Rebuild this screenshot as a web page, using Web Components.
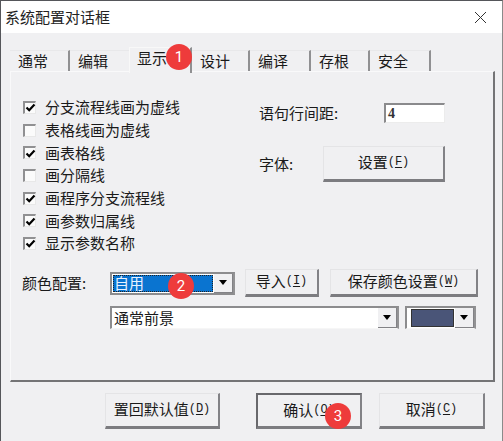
<!DOCTYPE html>
<html lang="zh-CN">
<head>
<meta charset="utf-8">
<title>系统配置对话框</title>
<style>
html, body { margin: 0; padding: 0; background: #f0f0f2; }
body { width: 503px; height: 441px; overflow: hidden; font: 15px/20px "Noto Sans CJK SC", sans-serif; color: #1a1a1a; }
</style>
</head>
<body>
<dlg-window caption="系统配置对话框">
  <tab-strip>
    <tab-item w="60">通常</tab-item>
    <tab-item w="61">编辑</tab-item>
    <tab-item w="63" active>显示<num-badge n="1" style="left:36px;top:-4px"></num-badge></tab-item>
    <tab-item w="58">设计</tab-item>
    <tab-item>编译</tab-item>
    <tab-item w="59">存根</tab-item>
    <tab-item>安全</tab-item>
  </tab-strip>
  <tab-panel>
    <top-row>
      <check-list>
        <check-row checked>分支流程线画为虚线</check-row>
        <check-row>表格线画为虚线</check-row>
        <check-row checked>画表格线</check-row>
        <check-row>画分隔线</check-row>
        <check-row checked>画程序分支流程线</check-row>
        <check-row checked>画参数归属线</check-row>
        <check-row checked>显示参数名称</check-row>
      </check-list>
      <side-opts>
        <opt-row w="125"><span>语句行间距:</span><num-input value="4"></num-input></opt-row>
        <opt-row w="64"><span>字体:</span><win-button w="122" h="36">设置<hot-key>F</hot-key></win-button></opt-row>
      </side-opts>
    </top-row>
    <color-row>
      <span slot="label">颜色配置:</span>
      <win-combo w="125" selected>自用<num-badge n="2" style="left:56px;top:-1px"></num-badge></win-combo>
      <win-button w="74" h="28" style="margin-left:10px">导入<hot-key>I</hot-key></win-button>
      <win-button w="148" h="28" style="margin-left:11px">保存颜色设置<hot-key>W</hot-key></win-button>
    </color-row>
    <color-row>
      <win-combo w="289">通常前景</win-combo>
      <win-combo w="71" swatch="#4a5578" style="margin-left:6px"></win-combo>
    </color-row>
  </tab-panel>
  <dlg-footer>
    <win-button w="115" h="36">置回默认值<hot-key>D</hot-key></win-button>
    <win-button w="106" h="36" focused style="margin-left:36px">确认<hot-key>O</hot-key><num-badge n="3" style="left:67px;top:8px"></num-badge></win-button>
    <win-button w="106" h="36" style="margin-left:17px">取消<hot-key>C</hot-key></win-button>
  </dlg-footer>
</dlg-window>

<script>
// 小工具：把 html 寫進 open shadow root
function shadow(el, html) {
  el.attachShadow({ mode: 'open' }).innerHTML = html;
}

class DlgWindow extends HTMLElement {
  connectedCallback() {
    shadow(this, `
<style>
:host { display: block; box-sizing: border-box; width: 503px; height: 441px; border: 1px solid #55565a; border-bottom: 0; border-right-color: #8a8a8a; background: #f0f0f2; }
.title { display: flex; align-items: center; justify-content: space-between; height: 32px; padding: 0 15px 0 4px; background: #fff; font-size: 15px; color: #222; }
.body { padding-top: 15px; }
svg { display: block; }
</style>
<div class="title"><span>${this.getAttribute('caption')}</span>
<svg width="13" height="13" viewBox="0 0 13 13"><path d="M1 1L12 12M12 1L1 12" stroke="#333" stroke-width="1" fill="none"/></svg></div>
<div class="body"><slot></slot></div>`);
  }
}

class TabStrip extends HTMLElement {
  connectedCallback() {
    shadow(this, `
<style>
:host { display: flex; height: 23px; margin-left: 9px; align-items: flex-start; position: relative; z-index: 1; }
</style><slot></slot>`);
  }
}

class TabItem extends HTMLElement {
  connectedCallback() {
    const w = this.getAttribute('w') || 61;
    shadow(this, `
<style>
:host { display: block; box-sizing: border-box; position: relative; width: ${w}px; height: 21px; margin-top: 2px; padding-left: 8px; line-height: 19px; border-right: 2px solid #909092; border-top: 1px solid #e8e8ea; }
:host([active]) { height: 26px; margin: -1px 0 0 -2px; padding-left: 7px; line-height: 20px; background: #f0f0f2; z-index: 2; border-top: 1px solid #f8f8f8; border-left: 1px solid #f8f8f8; border-right: 2px solid #909092; }
</style><slot></slot>`);
  }
}

class TabPanel extends HTMLElement {
  connectedCallback() {
    shadow(this, `
<style>
:host { display: block; box-sizing: border-box; width: 485px; height: 311px; margin-left: 9px; padding: 24px 0 0 12px; border: 1px solid #f9f9fa; border-right: 2px solid #747476; border-bottom: 2px solid #747476; }
</style><slot></slot>`);
  }
}

class TopRow extends HTMLElement {
  connectedCallback() {
    shadow(this, `<style>:host { display: flex; height: 159px; }</style><slot></slot>`);
  }
}

class CheckList extends HTMLElement {
  connectedCallback() {
    shadow(this, `<style>:host { display: grid; grid-auto-rows: 22.7px; width: 236px; align-content: start; }</style><slot></slot>`);
  }
}

class CheckRow extends HTMLElement {
  connectedCallback() {
    const mark = this.hasAttribute('checked')
      ? '<svg width="11" height="11" viewBox="0 0 11 11"><path d="M1.5 5.5L4.2 8.2L9.5 2.4" stroke="#000" stroke-width="2.2" fill="none"/></svg>'
      : '';
    shadow(this, `
<style>
:host { display: flex; align-items: center; gap: 9px; line-height: 20px; }
.box { box-sizing: border-box; display: flex; align-items: center; justify-content: center; width: 13px; height: 13px; background: #fbfbfb; border: 2px solid #909092; border-right: 1px solid #e8e8e8; border-bottom: 1px solid #e8e8e8; }
svg { display: block; flex: none; }
</style>
<span class="box">${mark}</span><span><slot></slot></span>`);
  }
}

class SideOpts extends HTMLElement {
  connectedCallback() {
    shadow(this, `<style>:host { display: flex; flex-direction: column; gap: 23px; padding-top: 7px; }</style><slot></slot>`);
  }
}

class OptRow extends HTMLElement {
  connectedCallback() {
    shadow(this, `
<style>
:host { display: grid; grid-template-columns: ${this.getAttribute('w')}px auto; align-items: center; }
</style><slot></slot>`);
  }
}

class NumInput extends HTMLElement {
  connectedCallback() {
    shadow(this, `
<style>
:host { display: block; box-sizing: border-box; width: 61px; height: 20px; padding-left: 2px; background: #fff; border: 2px solid #8a8a8c; border-right: 1px solid #ececec; border-bottom: 1px solid #ececec; font: bold 14px/17px "Liberation Serif", serif; color: #333; }
</style>${this.getAttribute('value')}`);
  }
}

class WinButton extends HTMLElement {
  connectedCallback() {
    const w = this.getAttribute('w'), h = this.getAttribute('h');
    shadow(this, `
<style>
:host { display: flex; box-sizing: border-box; position: relative; align-items: center; justify-content: center; flex: none; width: ${w}px; height: ${h}px; padding-bottom: 2px; background: #f0f0f2; border: 1px solid #e4e4e6; border-right: 2px solid #828286; border-bottom: 3px solid #7c7c80; white-space: nowrap; }
:host([focused]) { border-top: 2px solid #68686c; border-left: 2px solid #68686c; }
</style><slot></slot>`);
  }
}

class HotKey extends HTMLElement {
  connectedCallback() {
    shadow(this, `
<style>
:host { display: inline; font: 12px/20px "Liberation Mono", monospace; }
u { text-underline-offset: 2px; }
</style>(<u><slot></slot></u>)`);
  }
}

class WinCombo extends HTMLElement {
  connectedCallback() {
    const sel = this.hasAttribute('selected');
    const swatch = this.getAttribute('swatch');
    const inner = swatch ? `<i class="swatch" style="background:${swatch}"></i>` : '<slot></slot>';
    shadow(this, `
<style>
:host { display: flex; box-sizing: border-box; position: relative; flex: none; width: ${this.getAttribute('w')}px; height: 23px; background: #fff; border: 2px solid #8c8c8e; border-right-color: #929294; border-bottom: 1px solid #f6f6f6; }
:host([selected]) { border-bottom: 2px solid #8c8c8e; }
.val { flex: 1; display: flex; align-items: center; padding-left: 2px; line-height: 20px; overflow: visible; }
.sel { margin: 1px; padding-left: 1px; background: #0a74d0; color: #e8f2ff; outline: 1px dotted #222; outline-offset: -1px; }
.swatch { display: block; flex: 1; align-self: stretch; margin: 1px 1px 1px 2px; background: #444; border: 1px solid #333; }
.arrow { display: flex; align-items: center; justify-content: center; width: 19px; background: #f0f0f2; border-right: 1px solid #828286; border-bottom: 1px solid #828286; box-sizing: border-box; }
.arrow::before { content: ""; border: 4px solid transparent; border-top: 5px solid #000; border-bottom: 0; }
</style>
<span class="val ${sel ? 'sel' : ''}">${inner}</span><span class="arrow"></span>`);
  }
}

class ColorRow extends HTMLElement {
  connectedCallback() {
    shadow(this, `
<style>
:host { display: flex; align-items: center; height: 28px; margin: 14px 0 0 -1px; }
:host(:last-of-type) { height: 23px; margin-top: 9px; }
.label { display: block; box-sizing: border-box; width: 88px; flex: none; }
</style>
<span class="label"><slot name="label"></slot></span><slot></slot>`);
  }
}

class DlgFooter extends HTMLElement {
  connectedCallback() {
    shadow(this, `<style>:host { display: flex; margin: 11px 0 0 104px; }</style><slot></slot>`);
  }
}

class NumBadge extends HTMLElement {
  connectedCallback() {
    shadow(this, `
<style>
:host { display: flex; position: absolute; z-index: 5; align-items: center; justify-content: center; width: 26px; height: 26px; border-radius: 50%; background: #ee3b3b; color: #fff; font: 15px/26px Roboto, sans-serif; }
</style>${this.getAttribute('n')}`);
  }
}

const defs = { 'dlg-window': DlgWindow, 'tab-strip': TabStrip, 'tab-item': TabItem, 'tab-panel': TabPanel,
  'top-row': TopRow, 'check-list': CheckList, 'check-row': CheckRow, 'side-opts': SideOpts, 'opt-row': OptRow,
  'num-input': NumInput, 'win-button': WinButton, 'hot-key': HotKey, 'win-combo': WinCombo,
  'color-row': ColorRow, 'dlg-footer': DlgFooter, 'num-badge': NumBadge };
for (const name in defs) customElements.define(name, defs[name]);
</script>
</body>
</html>
